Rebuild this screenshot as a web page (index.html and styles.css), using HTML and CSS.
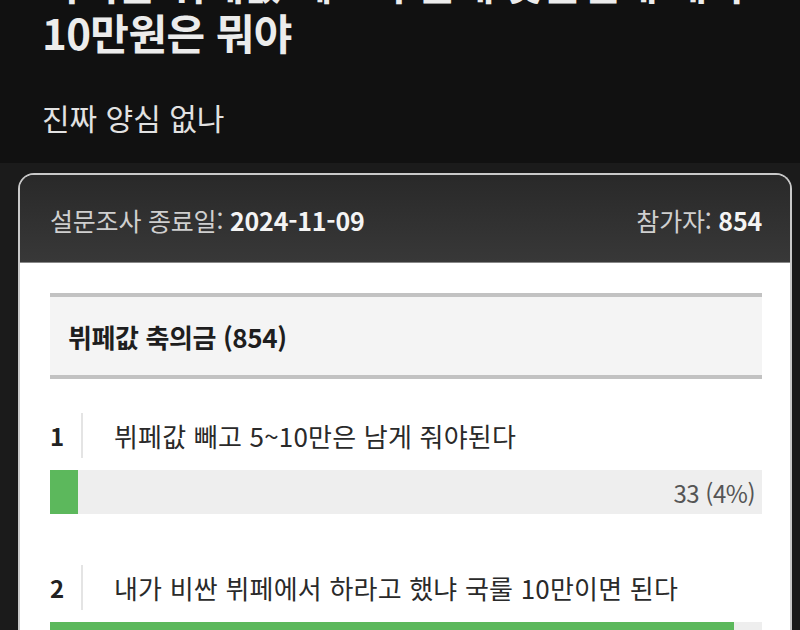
FILE: index.html
```html
<!DOCTYPE html>
<html lang="ko">
<head>
<meta charset="utf-8">
<link rel="stylesheet" href="styles.css">
</head>
<body>
<div class="top">
  <h1 class="title">축의금 뷔페값 빼고 주는게 맞는건데 왜 무조건<br>10만원은 뭐야</h1>
  <p class="sub">진짜 양심 없나</p>
</div>
<div class="card">
  <div class="card-head">
    <div class="meta">설문조사 종료일: <b>2024-11-09</b></div>
    <div class="meta">참가자: <b>854</b></div>
  </div>
  <div class="card-body">
    <div class="question">뷔페값 축의금 (854)</div>
    <div class="option">
      <div class="opt-row"><span class="num">1</span><span class="opt-text">뷔페값 빼고 5~10만은 남게 줘야된다</span></div>
      <div class="bar"><div class="fill" style="width:4%"></div><span class="count">33 (4%)</span></div>
    </div>
    <div class="option">
      <div class="opt-row"><span class="num">2</span><span class="opt-text">내가 비싼 뷔페에서 하라고 했냐 국룰 10만이면 된다</span></div>
      <div class="bar"><div class="fill" style="width:96%"></div><span class="count">821 (96%)</span></div>
    </div>
  </div>
</div>
</body>
</html>
```

FILE: styles.css
```css
* { box-sizing: border-box; }
html, body { margin: 0; padding: 0; }
body {
  background: #1b1b1b;
  font-family: "Noto Sans CJK KR", "Noto Sans", sans-serif;
  overflow: hidden;
}
.top {
  background: #111111;
  height: 163px;
  padding: 0 42px;
  overflow: hidden;
}
.title {
  margin: -43px 0 0 0;
  font-size: 42px;
  line-height: 50px;
  font-weight: 700;
  color: #ececec;
  letter-spacing: -0.6px;
  white-space: nowrap;
}
.sub {
  margin: 40px 0 0 0;
  font-size: 30px;
  line-height: 40px;
  color: #e2e2e2;
  letter-spacing: 0;
}
.card {
  margin: 10px 0 0 18px;
  width: 774px;
  border: 2px solid #c9c9c9;
  border-bottom: none;
  border-radius: 16px 16px 0 0;
  overflow: hidden;
}
.card-head {
  height: 88px;
  background: linear-gradient(#292929, #383838);
  border-bottom: 1px solid #888;
  display: flex;
  justify-content: space-between;
  align-items: center;
  padding: 2px 28px 0 30px;
}
.meta {
  font-size: 25px;
  color: #cfcfcf;
  letter-spacing: -0.2px;
}
.meta b { color: #f4f4f4; font-weight: 700; }
.card-body {
  background: #fff;
  padding: 30px 28px 40px 30px;
}
.question {
  background: #f4f4f4;
  border-top: 4px solid #c2c2c2;
  border-bottom: 4px solid #c2c2c2;
  height: 86px;
  display: flex;
  align-items: center;
  padding-left: 18px;
  font-size: 26px;
  font-weight: 700;
  color: #1e1e1e;
  letter-spacing: -0.4px;
}
.option { margin-top: 34px; }
.option + .option { margin-top: 51px; }
.opt-row {
  display: flex;
  align-items: center;
  height: 45px;
}
.num {
  width: 33px;
  align-self: stretch;
  display: flex;
  align-items: center;
  border-right: 2px solid #e4e4e4;
  font-size: 24px;
  font-weight: 600;
  color: #222;
}
.opt-text {
  padding-left: 31px;
  font-size: 26px;
  color: #2a2a2a;
  letter-spacing: 0.2px;
}
.bar {
  position: relative;
  margin-top: 12px;
  height: 44px;
  background: #eeeeee;
  display: flex;
  align-items: center;
  justify-content: flex-end;
}
.fill {
  position: absolute;
  left: 0; top: 0; bottom: 0;
  background: #5cb85c;
}
.count {
  position: relative;
  padding-right: 7px;
  font-size: 24px;
  color: #555;
  letter-spacing: -0.5px;
}
```
